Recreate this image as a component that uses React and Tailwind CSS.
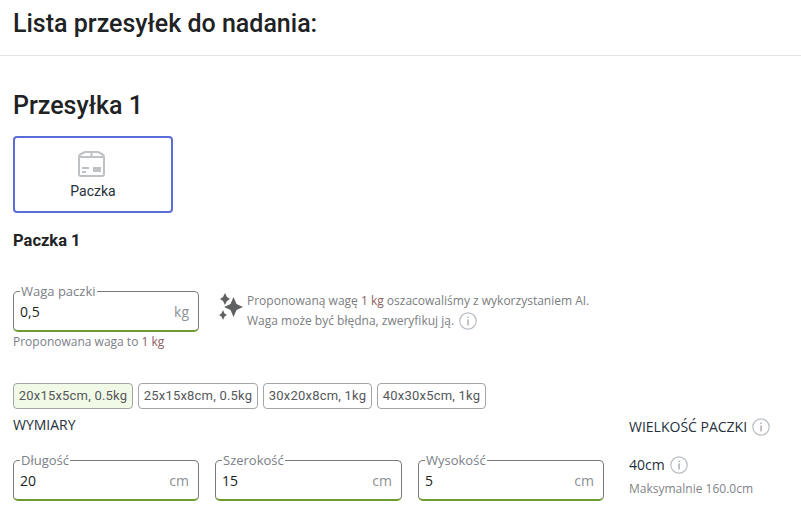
import React from "react";

const InfoIcon = ({ className = "" }) => (
  <svg viewBox="0 0 18 18" className={`w-[18px] h-[18px] shrink-0 ${className}`} fill="none">
    <circle cx="9" cy="9" r="8.2" stroke="#b9bec4" strokeWidth="1.2" />
    <rect x="8.5" y="4.6" width="1.1" height="1.4" fill="#8d9399" />
    <rect x="8.5" y="7.4" width="1.1" height="6" fill="#8d9399" />
  </svg>
);

const Sparkles = () => (
  <svg viewBox="0 0 25 28" className="w-[25px] h-[28px] shrink-0" fill="#5f6163">
    <path d="M6 0 L8 4 L11 6 L8 8 L6 12 L4 8 L1 6 L4 4 Z" />
    <path d="M14.5 4 L17.5 11 L24 14 L17.5 17 L14.5 24 L11.5 17 L5 14 L11.5 11 Z" />
    <path d="M4 17 L5.5 20.5 L8 22 L5.5 23.5 L4 27 L2.5 23.5 L0 22 L2.5 20.5 Z" />
  </svg>
);

const BoxIcon = () => (
  <svg viewBox="0 0 27 26" className="w-[27px] h-[26px] -ml-[4px]" fill="none">
    <path d="M1 6 Q1 4 3 3 L7 1 H20 L24 3 Q26 4 26 6 V23 Q26 25 24 25 H3 Q1 25 1 23 Z" stroke="#bfc2c5" strokeWidth="2" strokeLinejoin="round" />
    <path d="M1 6 H26 M13.5 1 V6" stroke="#bfc2c5" strokeWidth="2" />
    <rect x="4" y="16" width="7" height="2" fill="#bfc2c5" />
    <rect x="4" y="20" width="4" height="2" fill="#bfc2c5" />
    <rect x="15" y="16" width="8" height="5" fill="#bfc2c5" />
  </svg>
);

const Field = ({ label, value, unit, width }) => (
  <fieldset className={`${width} h-[47px] border border-[#77797b] border-b-2 border-b-[#6f9a2d] rounded-[5px] pl-[6px] pr-[9px] flex items-center`}>
    <legend className="ml-0 px-[1px] text-[13px] leading-[13px] text-[#7a8088]">{label}</legend>
    <div className="flex w-full items-center justify-between -mt-[6px]">
      <span className="text-[14px] text-[#1c1f22]">{value}</span>
      <span className="text-[14px] text-[#8b9094]">{unit}</span>
    </div>
  </fieldset>
);

const Chip = ({ children, active, width }) => (
  <div className={`${width} h-[26px] flex items-center justify-center rounded-[4px] border border-[#a3a5a7] text-[13px] tracking-[0.2px] text-[#55585b] font-['Roboto',sans-serif] ${active ? "bg-[#f1fae6]" : "bg-white"}`}>
    {children}
  </div>
);

export default function App() {
  return (
    <div className="w-[801px] h-[515px] overflow-hidden bg-white font-['Open_Sans',sans-serif]">
      <div className="h-[56px] border-b border-[#e2e3e4] pl-[13px] pt-[9px]">
        <h1 className="text-[25px] leading-[30px] font-medium text-[#202224] font-['Roboto',sans-serif]">Lista przesyłek do nadania:</h1>
      </div>

      <div className="pl-[13px]">
        <h2 className="mt-[33px] text-[25px] leading-[34px] font-medium text-[#202224] font-['Roboto',sans-serif]">Przesyłka 1</h2>

        <div className="mt-[13px] w-[160px] h-[77px] border-2 border-[#5a6dd8] rounded-[4px] flex flex-col items-center pt-[13px]">
          <BoxIcon />
          <span className="mt-[4px] text-[14px] leading-[20px] text-[#26303a] font-['Roboto',sans-serif]">Paczka</span>
        </div>

        <h3 className="mt-[18px] text-[16.5px] leading-[20px] font-bold text-[#202224] font-['Roboto',sans-serif]">Paczka 1</h3>

        <div className="mt-[34px] flex">
          <div className="w-[186px]">
            <Field label="Waga paczki" value="0,5" unit="kg" width="w-[186px]" />
            <p className="mt-[2px] text-[12px] leading-[16px] text-[#7b8087]">Proponowana waga to <span className="text-[#8a6060]">1 kg</span></p>
          </div>
          <div className="ml-[20px] mt-[8px] flex items-start">
            <Sparkles />
            <div className="ml-[3px] text-[12px] leading-[20px] text-[#7b7d80] -mt-[2px]">
              <p>Proponowaną wagę <span className="text-[#8a6060]">1 kg</span> oszacowaliśmy z wykorzystaniem AI.</p>
              <p className="flex items-center gap-[5px]">Waga może być błędna, zweryfikuj ją. <InfoIcon /></p>
            </div>
          </div>
        </div>

        <div className="mt-[33px] flex gap-[5px]">
          <Chip active width="w-[120px]">20x15x5cm, 0.5kg</Chip>
          <Chip width="w-[120px]">25x15x8cm, 0.5kg</Chip>
          <Chip width="w-[109px]">30x20x8cm, 1kg</Chip>
          <Chip width="w-[109px]">40x30x5cm, 1kg</Chip>
        </div>

        <div className="flex">
          <div className="w-[616px]">
            <p className="mt-[6px] text-[14px] leading-[20px] text-[#26303a]">WYMIARY</p>
            <div className="mt-[19px] flex gap-[16px]">
              <Field label="Długość" value="20" unit="cm" width="w-[186px]" />
              <Field label="Szerokość" value="15" unit="cm" width="w-[187px]" />
              <Field label="Wysokość" value="5" unit="cm" width="w-[186px]" />
            </div>
          </div>
          <div>
            <p className="flex items-center gap-[5px] mt-[8px] text-[14px] leading-[20px] text-[#26303a]">WIELKOŚĆ PACZKI <InfoIcon /></p>
            <p className="flex items-center gap-[5px] mt-[18px] text-[14px] leading-[20px] text-[#26303a]">40cm <InfoIcon /></p>
            <p className="mt-[6px] text-[12px] leading-[16px] text-[#7f8488]">Maksymalnie 160.0cm</p>
          </div>
        </div>
      </div>
    </div>
  );
}
